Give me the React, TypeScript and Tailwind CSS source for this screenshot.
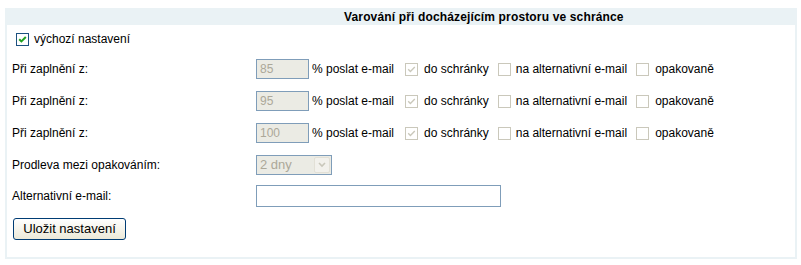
import React from "react";

function Check({ checked, disabled }: { checked?: boolean; disabled?: boolean }) {
  return (
    <span
      className={`inline-flex h-[13px] w-[13px] shrink-0 items-center justify-center border bg-white ${
        disabled ? "border-[#cac8bb]" : "border-[#1c5180]"
      }`}
    >
      {checked && (
        <svg width="9" height="9" viewBox="0 0 9 9">
          <path
            d="M1.2 4.2 L3.4 6.4 L7.8 2"
            stroke={disabled ? "#cac8bb" : "#21a121"}
            strokeWidth={disabled ? 1.4 : 2}
            fill="none"
          />
        </svg>
      )}
    </span>
  );
}

function ThresholdRow({ value }: { value: string }) {
  return (
    <div className="flex h-[32px] items-center">
      <span className="w-[244px]">Při zaplnění z:</span>
      <div className="flex h-[20px] w-[53px] items-center border border-[#7f9db9] bg-[#ebebe4] px-[3px] text-[#aca899]">
        {value}
      </div>
      <span className="ml-[3px]">% poslat e-mail</span>
      <span className="ml-[11px] flex"><Check checked disabled /></span>
      <span className="ml-[6px]">do schránky</span>
      <span className="ml-[9px] flex"><Check disabled /></span>
      <span className="ml-[5px]">na alternativní e-mail</span>
      <span className="ml-[9px] flex"><Check disabled /></span>
      <span className="ml-[6px]">opakovaně</span>
    </div>
  );
}

export default function App() {
  return (
    <div className="h-[265px] w-[801px] bg-white pt-[8px] pl-[5px] text-[12px] text-black" style={{ fontFamily: '"Liberation Sans", Arial, sans-serif' }}>
      <div className="h-[251px] w-[792px] border-x-2 border-b-2 border-[#eaf2f5]">
        {/* Header */}
        <div className="flex h-[17px] items-center bg-[#eaf2f5] pl-[337px] font-bold tracking-[0.15px]">
          Varování při docházejícím prostoru ve schránce
        </div>

        <div className="pl-[5px]">
          <div className="flex h-[28px] items-center pl-[4px]">
            <Check checked />
            <span className="ml-[5px]">výchozí nastavení</span>
          </div>

          <ThresholdRow value="85" />
          <ThresholdRow value="95" />
          <ThresholdRow value="100" />

          <div className="flex h-[32px] items-center">
            <span className="w-[244px]">Prodleva mezi opakováním:</span>
            <div className="flex h-[20px] w-[76px] items-center justify-between border border-[#7f9db9] bg-[#ebebe4] pl-[3px] pr-[1px] text-[13px] text-[#aca899]">
              <span>2 dny</span>
              <span className="flex h-[16px] w-[16px] items-center justify-center rounded-[2px] border border-[#e2e0d6] bg-[#f2f1ec]">
                <svg width="8" height="6" viewBox="0 0 8 6">
                  <path d="M1 1 L4 4 L7 1" stroke="#c9c7ba" strokeWidth="1.6" fill="none" />
                </svg>
              </span>
            </div>
          </div>

          <div className="flex h-[30px] items-center">
            <span className="w-[244px]">Alternativní e-mail:</span>
            <input
              type="text"
              className="h-[22px] w-[245px] border border-[#7f9db9] bg-white px-[3px] outline-none"
            />
          </div>

          <div className="pt-[7px] pl-[1px]">
            <button className="h-[22px] w-[113px] rounded-[3px] border border-[#003c74] bg-gradient-to-b from-white to-[#ece9d8] text-[13px]">
              Uložit nastavení
            </button>
          </div>
        </div>
      </div>
    </div>
  );
}
